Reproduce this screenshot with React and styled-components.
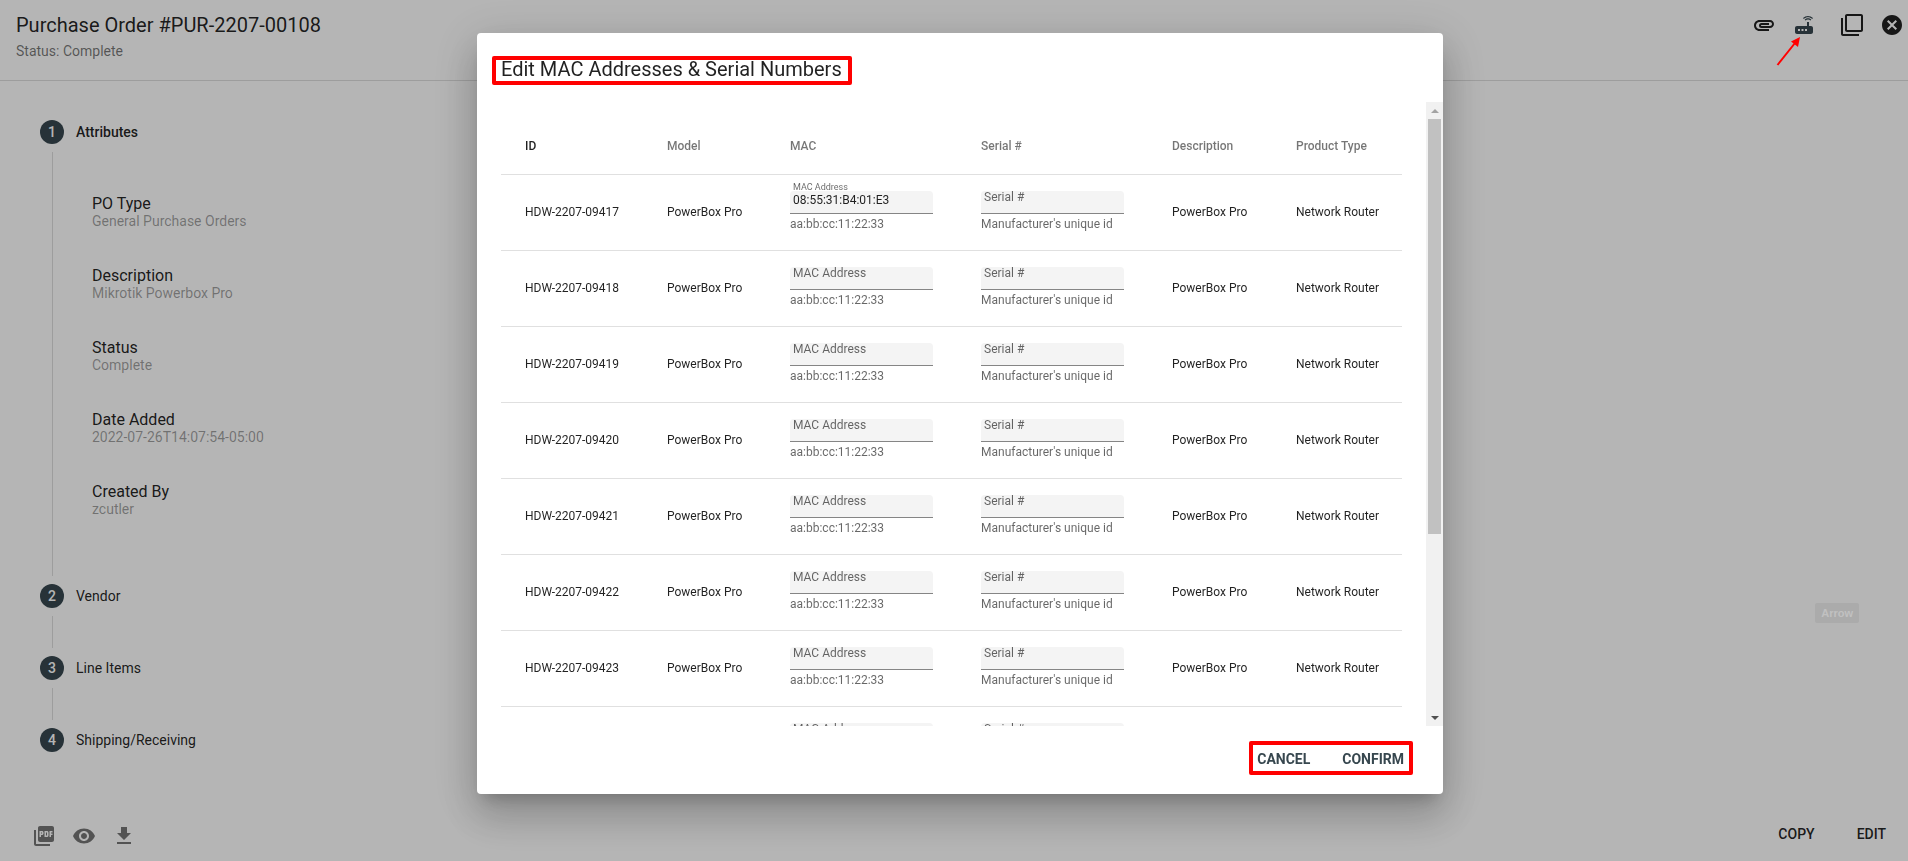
import { useEffect, useRef, useState } from 'react';
import styled, { createGlobalStyle } from 'styled-components';
import {
  MdAttachment,
  MdCancel,
  MdFilterNone,
  MdGetApp,
  MdPictureAsPdf,
  MdRouter,
  MdVisibility,
} from 'react-icons/md';

const GlobalStyle = createGlobalStyle`
  * {
    box-sizing: border-box;
  }

  body {
    margin: 0;
    background: #fff;
    color: rgba(0, 0, 0, .87);
    font-family: Roboto, sans-serif;
    font-size: 14px;
  }

  h1, h2, p, dl, dt, dd, ol {
    margin: 0;
    padding: 0;
    font-weight: 400;
  }

  button {
    border: 0;
    padding: 0;
    background: none;
    font-family: inherit;
    cursor: pointer;
  }
`;

const Page = styled.div`
  display: flex;
  flex-direction: column;
  min-height: 100vh;
`;

const PageHeader = styled.header`
  display: flex;
  justify-content: space-between;
  height: 81px;
  padding: 13px 4px 0 16px;
  border-bottom: 1px solid #dedede;
`;

const PageTitle = styled.h1`
  font-size: 20px;
  line-height: 24px;
`;

const PageStatus = styled.p`
  margin-top: 4px;
  line-height: 20px;
  color: rgba(0, 0, 0, .54);
`;

const HeaderTools = styled.div`
  display: flex;
  align-items: flex-start;
  gap: 16px;
`;

const ToolGroup = styled.div`
  display: flex;
  gap: 16px;
  margin-right: 8px;
`;

const IconButton = styled.button`
  width: 24px;
  height: 24px;
  font-size: 24px;
  line-height: 0;
  color: ${({ $color }) => $color || 'rgba(0, 0, 0, .87)'};
`;

const Steps = styled.ol`
  flex: 1;
  padding: 39px 40px 0;
  list-style: none;
`;

const Step = styled.li`
  display: flex;
  gap: 12px;
`;

const Rail = styled.div`
  display: flex;
  flex-direction: column;
  align-items: center;
  width: 24px;
  min-height: 72px;
`;

const StepNumber = styled.span`
  width: 24px;
  height: 24px;
  border-radius: 50%;
  background: #37474f;
  color: #fff;
  font-weight: 500;
  line-height: 24px;
  text-align: center;
`;

const RailLine = styled.span`
  flex: 1;
  width: 1px;
  margin: 8px 0;
  background: #dedede;
`;

const StepLabel = styled.p`
  line-height: 24px;
  font-weight: ${({ $active }) => ($active ? 500 : 400)};
`;

const Details = styled.dl`
  padding: 32px 16px 48px;
`;

const Detail = styled.div`
  display: flex;
  flex-direction: column;
  justify-content: center;
  height: 72px;
`;

const DetailName = styled.dt`
  font-size: 16px;
  line-height: 18px;
`;

const DetailValue = styled.dd`
  line-height: 16px;
  color: rgba(0, 0, 0, .38);
`;

const PageFooter = styled.footer`
  display: flex;
  align-items: center;
  justify-content: space-between;
  height: 50px;
  padding: 0 22px 0 32px;
`;

const FooterIcons = styled.div`
  display: flex;
  gap: 16px;
`;

const FooterActions = styled.div`
  display: flex;
  gap: 42px;
  padding-bottom: 5px;
`;

const TextButton = styled.button`
  color: #37474f;
  font-size: 14px;
  font-weight: 700;
  line-height: 28px;
  text-transform: uppercase;
`;

const DarkButton = styled(TextButton)`
  color: rgba(0, 0, 0, .87);
  font-weight: 500;
`;

const Backdrop = styled.div`
  position: fixed;
  inset: 0;
  display: flex;
  align-items: center;
  justify-content: center;
  padding: 0 0 34px 12px;
  background: rgba(0, 0, 0, .29);
`;

const Dialog = styled.section`
  display: flex;
  flex-direction: column;
  width: 966px;
  max-width: 94%;
  border-radius: 4px;
  background: #fff;
  box-shadow: 0 11px 15px -7px rgba(0, 0, 0, .2),
    0 24px 38px 3px rgba(0, 0, 0, .14),
    0 9px 46px 8px rgba(0, 0, 0, .12);
`;

const DialogHeader = styled.div`
  display: flex;
  height: 69px;
  padding: 23px 15px 0;
`;

const DialogTitle = styled.h2`
  height: 29px;
  padding: 0 6px 0 5px;
  border: 4px solid #f00;
  border-radius: 2px;
  font-size: 20px;
  line-height: 18px;
`;

const DialogBody = styled.div`
  display: flex;
  height: calc(100vh - 237px);
`;

const ScrollPane = styled.div`
  flex: 1;
  min-width: 0;
  padding: 16px 24px 55px;
  overflow-y: scroll;
  scrollbar-width: none;
`;

const DialogFooter = styled.div`
  display: flex;
  justify-content: flex-end;
  height: 68px;
  padding: 15px 30px 0;
`;

const DialogActions = styled.div`
  display: flex;
  gap: 32px;
  height: 34px;
  padding: 0 5px 0 4px;
  border: 4px solid #f00;
  border-radius: 2px;
`;

const Table = styled.table`
  width: 100%;
  border-collapse: collapse;
  table-layout: fixed;
  font-size: 12px;
`;

const HeadCell = styled.th`
  width: ${({ $width }) => $width};
  height: 56px;
  padding: 0 0 0 24px;
  border-bottom: 1px solid #e0e0e0;
  color: ${({ $sorted }) => ($sorted ? 'rgba(0, 0, 0, .87)' : 'rgba(0, 0, 0, .54)')};
  font-weight: 500;
  text-align: left;
`;

const Cell = styled.td`
  height: 76px;
  padding: 0 0 0 24px;
  border-bottom: 1px solid #e0e0e0;
`;

const FieldCell = styled(Cell)`
  padding: 16px 24px 0;
  vertical-align: top;
`;

const Field = styled.div`
  position: relative;
`;

const FieldInput = styled.input`
  display: block;
  width: 100%;
  height: 23px;
  padding: 0 3px 3px;
  border: 0;
  border-bottom: 1px solid #858585;
  border-radius: 4px 4px 0 0;
  background: #f4f4f4;
  color: rgba(0, 0, 0, .87);
  font-family: inherit;
  font-size: 12px;
  outline: 0;
`;

/* sits over the empty input, moves above it once there is a value */
const FieldLabel = styled.label`
  position: absolute;
  top: ${({ $float }) => ($float ? '-10px' : '-1px')};
  left: 3px;
  color: rgba(0, 0, 0, .6);
  font-size: ${({ $float }) => ($float ? '9px' : '12px')};
  line-height: ${({ $float }) => ($float ? '12px' : '14px')};
  pointer-events: none;
`;

const Helper = styled.p`
  margin-top: 2px;
  color: rgba(0, 0, 0, .6);
  line-height: 16px;
`;

const ScrollBar = styled.div`
  display: flex;
  flex-direction: column;
  width: 17px;
  background: #f1f1f1;
`;

const ScrollArrow = styled.button`
  display: flex;
  align-items: center;
  justify-content: center;
  height: 17px;

  &::before {
    content: '';
    border: 4px solid transparent;
    border-top-width: ${({ $up }) => ($up ? 0 : '4px')};
    border-bottom-width: ${({ $up }) => ($up ? '4px' : 0)};
    border-top-color: #505050;
    border-bottom-color: #a3a3a3;
  }
`;

const ScrollTrack = styled.div`
  flex: 1;
  padding: 0 2px;
`;

const ScrollThumb = styled.div`
  background: #c1c1c1;
`;

const Pointer = styled.svg`
  position: fixed;
  top: 34px;
  right: 104px;
  width: 30px;
  height: 34px;
`;

const ToolHint = styled.span`
  position: fixed;
  top: 603px;
  right: 49px;
  padding: 0 6px;
  border-radius: 2px;
  background: #ababab;
  color: #c1c1c1;
  font-family: "Liberation Sans", Arial, sans-serif;
  font-size: 11px;
  font-weight: 700;
  line-height: 20px;
`;

const details = [
  ['PO Type', 'General Purchase Orders'],
  ['Description', 'Mikrotik Powerbox Pro'],
  ['Status', 'Complete'],
  ['Date Added', '2022-07-26T14:07:54-05:00'],
  ['Created By', 'zcutler'],
];

const columns = [
  { name: 'ID', width: '142px' },
  { name: 'Model', width: '123px' },
  { name: 'MAC', width: '191px' },
  { name: 'Serial #', width: '191px' },
  { name: 'Description', width: '124px' },
  { name: 'Product Type', width: 'auto' },
];

const hardware = Array.from({ length: 10 }, (_, i) => ({
  id: `HDW-2207-0${9417 + i}`,
  model: 'PowerBox Pro',
  mac: i === 0 ? '08:55:31:B4:01:E3' : '',
  type: 'Network Router',
}));

function TextField({ id, label, helper, initial = '' }) {
  const [value, setValue] = useState(initial);

  return (
    <Field>
      <FieldInput id={id} value={value} onChange={(e) => setValue(e.target.value)} />
      <FieldLabel htmlFor={id} $float={value !== ''}>{label}</FieldLabel>
      <Helper>{helper}</Helper>
    </Field>
  );
}

function HardwareTable() {
  return (
    <Table>
      <thead>
        <tr>
          {columns.map((col) => (
            <HeadCell key={col.name} $width={col.width} $sorted={col.name === 'ID'}>{col.name}</HeadCell>
          ))}
        </tr>
      </thead>
      <tbody>
        {hardware.map((item) => (
          <tr key={item.id}>
            <Cell>{item.id}</Cell>
            <Cell>{item.model}</Cell>
            <FieldCell>
              <TextField id={`mac-${item.id}`} label="MAC Address" helper="aa:bb:cc:11:22:33" initial={item.mac} />
            </FieldCell>
            <FieldCell>
              <TextField id={`serial-${item.id}`} label="Serial #" helper="Manufacturer's unique id" />
            </FieldCell>
            <Cell>{item.model}</Cell>
            <Cell>{item.type}</Cell>
          </tr>
        ))}
      </tbody>
    </Table>
  );
}

function ScrollArea({ children }) {
  const pane = useRef(null);
  const [bar, setBar] = useState({ size: 70, offset: 0 });

  const measure = () => {
    const { scrollTop, scrollHeight, clientHeight } = pane.current;
    const track = clientHeight - 34;
    setBar({
      size: (clientHeight / scrollHeight) * 100,
      offset: (scrollTop / scrollHeight) * track,
    });
  };

  useEffect(() => {
    measure();
    window.addEventListener('resize', measure);
    return () => window.removeEventListener('resize', measure);
  }, []);

  const scroll = (by) => pane.current.scrollBy({ top: by });

  return (
    <DialogBody>
      <ScrollPane ref={pane} onScroll={measure}>{children}</ScrollPane>
      <ScrollBar>
        <ScrollArrow $up aria-label="Scroll up" onClick={() => scroll(-40)} />
        <ScrollTrack>
          <ScrollThumb style={{ height: `${bar.size}%`, transform: `translateY(${bar.offset}px)` }} />
        </ScrollTrack>
        <ScrollArrow aria-label="Scroll down" onClick={() => scroll(40)} />
      </ScrollBar>
    </DialogBody>
  );
}

function OrderPage() {
  return (
    <Page>
      <PageHeader>
        <div>
          <PageTitle>Purchase Order #PUR-2207-00108</PageTitle>
          <PageStatus>Status: Complete</PageStatus>
        </div>
        <HeaderTools>
          <ToolGroup>
            <IconButton aria-label="Attachments"><MdAttachment /></IconButton>
            <IconButton aria-label="Edit MAC addresses" $color="#37474f"><MdRouter /></IconButton>
          </ToolGroup>
          <IconButton aria-label="Open in window"><MdFilterNone /></IconButton>
          <IconButton aria-label="Close"><MdCancel /></IconButton>
        </HeaderTools>
      </PageHeader>

      <Steps>
        <Step>
          <Rail>
            <StepNumber>1</StepNumber>
            <RailLine />
          </Rail>
          <div>
            <StepLabel $active>Attributes</StepLabel>
            <Details>
              {details.map(([name, value]) => (
                <Detail key={name}>
                  <DetailName>{name}</DetailName>
                  <DetailValue>{value}</DetailValue>
                </Detail>
              ))}
            </Details>
          </div>
        </Step>
        {['Vendor', 'Line Items', 'Shipping/Receiving'].map((label, i) => (
          <Step key={label}>
            <Rail>
              <StepNumber>{i + 2}</StepNumber>
              {i < 2 && <RailLine />}
            </Rail>
            <StepLabel>{label}</StepLabel>
          </Step>
        ))}
      </Steps>

      <PageFooter>
        <FooterIcons>
          <IconButton aria-label="PDF" $color="rgba(0, 0, 0, .54)"><MdPictureAsPdf /></IconButton>
          <IconButton aria-label="Preview" $color="rgba(0, 0, 0, .54)"><MdVisibility /></IconButton>
          <IconButton aria-label="Download" $color="rgba(0, 0, 0, .54)"><MdGetApp /></IconButton>
        </FooterIcons>
        <FooterActions>
          <DarkButton>Copy</DarkButton>
          <DarkButton>Edit</DarkButton>
        </FooterActions>
      </PageFooter>
    </Page>
  );
}

export default function App() {
  return (
    <>
      <GlobalStyle />
      <OrderPage />
      <Backdrop>
        <Dialog role="dialog" aria-labelledby="dialog-title">
          <DialogHeader>
            <DialogTitle id="dialog-title">Edit MAC Addresses &amp; Serial Numbers</DialogTitle>
          </DialogHeader>
          <ScrollArea>
            <HardwareTable />
          </ScrollArea>
          <DialogFooter>
            <DialogActions>
              <TextButton>Cancel</TextButton>
              <TextButton>Confirm</TextButton>
            </DialogActions>
          </DialogFooter>
        </Dialog>
      </Backdrop>
      <Pointer viewBox="0 0 30 34">
        <path d="M3.500 31L21 9" stroke="#f00" strokeWidth="2" fill="none" />
        <path d="M26 3L24 13L17 7.500Z" fill="#f00" />
      </Pointer>
      <ToolHint>Arrow</ToolHint>
    </>
  );
}
